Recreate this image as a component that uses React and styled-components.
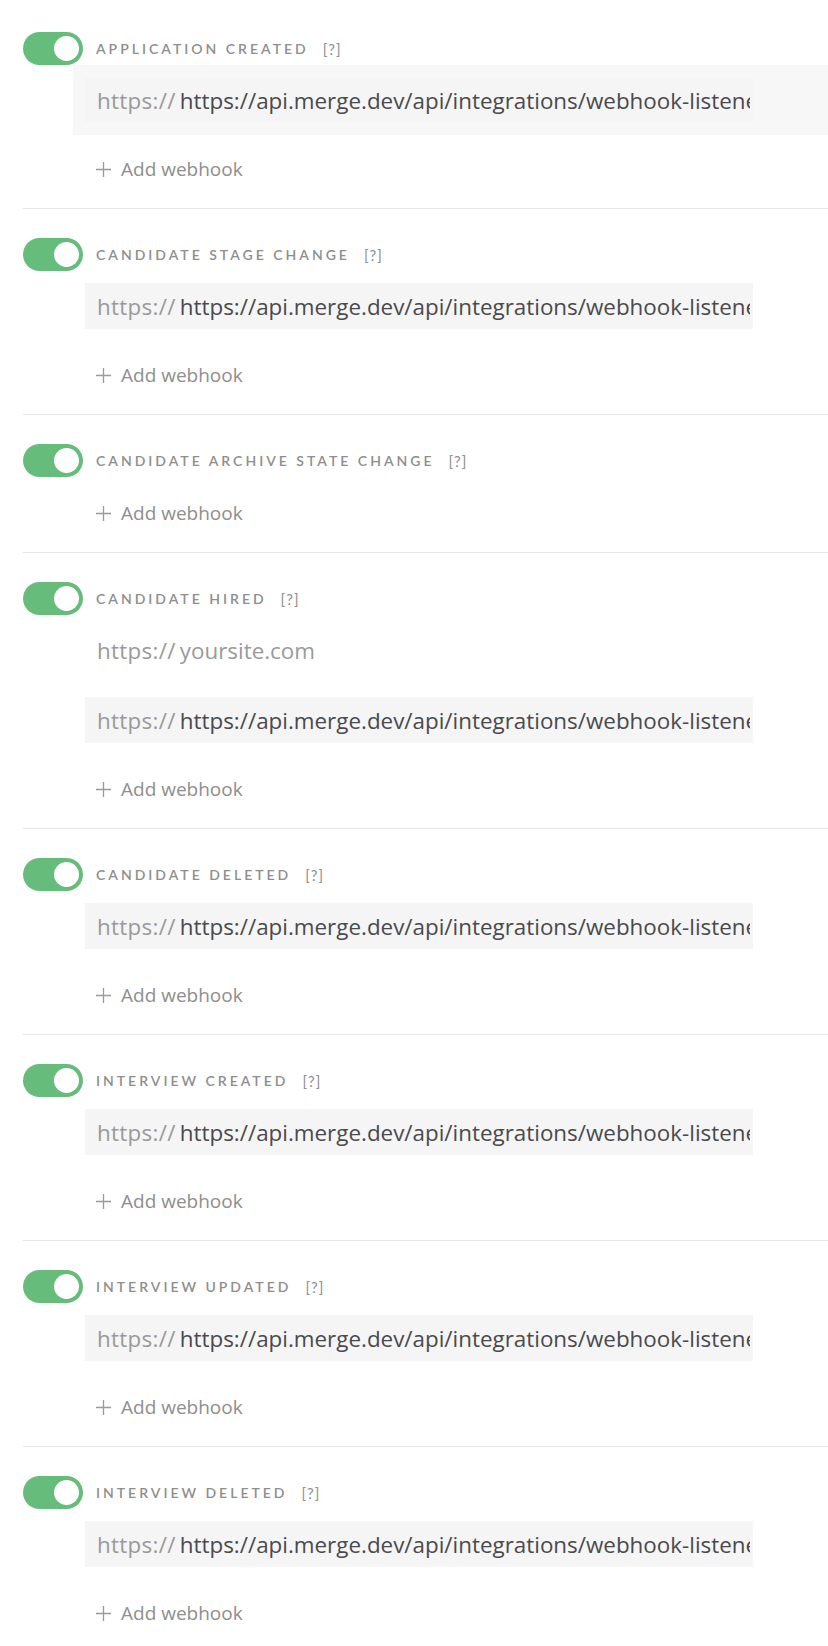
import React from 'react';
import styled, { createGlobalStyle } from 'styled-components';

const GlobalStyle = createGlobalStyle`
    body {
        margin: 0;
        background: #ffffff;
        font-family: 'Open Sans', 'Noto Sans', sans-serif;
    }
`;

const Page = styled.div`
    padding: 3px 0 0 23px;
    width: 805px;
    overflow: hidden;
`;

const Section = styled.section`
    padding: 29px 0 27px;
    border-bottom: ${(p) => (p.last ? 'none' : '1px solid #e6e6e6')};
`;

const Header = styled.div`
    display: flex;
    align-items: center;
    height: 33px;
`;

const Toggle = styled.span`
    position: relative;
    flex: none;
    width: 60px;
    height: 33px;
    border-radius: 17px;
    background: #66bc7a;
    margin-right: 13px;

    &::after {
        content: '';
        position: absolute;
        top: 4px;
        right: 4px;
        width: 25px;
        height: 25px;
        border-radius: 50%;
        background: #ffffff;
    }
`;

const Label = styled.span`
    font-family: 'Lato', sans-serif;
    font-size: 14px;
    font-weight: 600;
    letter-spacing: 3px;
    text-transform: uppercase;
    color: #8e8e8e;
`;

const Help = styled.span`
    margin-left: 14px;
    font-family: 'Lato', sans-serif;
    font-size: 15px;
    letter-spacing: 1px;
    color: #8e8e8e;
`;

const Body = styled.div`
    padding-left: 62px;
`;

const Row = styled.div`
    margin-left: -12px;
    padding: 12px 0 12px 12px;
    background: ${(p) => (p.active ? '#f7f7f7' : 'transparent')};
`;

const Field = styled.div`
    display: flex;
    align-items: center;
    width: 668px;
    height: 46px;
    box-sizing: border-box;
    padding: 0 3px 0 12px;
    background: ${(p) => (p.filled ? '#f5f5f5' : 'transparent')};
    font-size: 22.4px;
    white-space: nowrap;
    overflow: hidden;
`;

const Prefix = styled.span`
    color: #9a9a9a;
    letter-spacing: 0.3px;
    margin-right: 4px;
`;

const Value = styled.span`
    color: ${(p) => (p.placeholder ? '#9a9a9a' : '#4a4a4e')};
    overflow: hidden;
`;

const AddButton = styled.button`
    display: flex;
    align-items: center;
    gap: 10px;
    height: 24px;
    margin-top: ${(p) => (p.alone ? '24px' : '22px')};
    padding: 0 0 0 11px;
    background: none;
    border: 0;
    font-family: inherit;
    font-size: 19px;
    color: #8e8e8e;
    cursor: pointer;
`;

const Plus = () => (
    <svg width="15" height="15" viewBox="0 0 15 15">
        <path d="M7.5 0v15M0 7.5h15" stroke="#999" strokeWidth="1.3" fill="none" />
    </svg>
);

const URL = 'https://api.merge.dev/api/integrations/webhook-listener';

const events = [
    { name: 'Application created', hooks: [URL], active: true },
    { name: 'Candidate stage change', hooks: [URL] },
    { name: 'Candidate archive state change', hooks: [] },
    { name: 'Candidate hired', hooks: ['', URL] },
    { name: 'Candidate deleted', hooks: [URL] },
    { name: 'Interview created', hooks: [URL] },
    { name: 'Interview updated', hooks: [URL] },
    { name: 'Interview deleted', hooks: [URL] },
];

export default function App() {
    return (
        <Page>
            <GlobalStyle />
            {events.map((event, i) => (
                <Section key={event.name} last={i === events.length - 1}>
                    <Header>
                        <Toggle />
                        <Label>{event.name}</Label>
                        <Help>[?]</Help>
                    </Header>
                    <Body>
                        {event.hooks.map((hook, j) => (
                            <Row key={j} active={event.active}>
                                <Field filled={!!hook}>
                                    <Prefix>https://</Prefix>
                                    <Value placeholder={!hook}>{hook || 'yoursite.com'}</Value>
                                </Field>
                            </Row>
                        ))}
                        <AddButton alone={event.hooks.length === 0}>
                            <Plus />
                            Add webhook
                        </AddButton>
                    </Body>
                </Section>
            ))}
        </Page>
    );
}
